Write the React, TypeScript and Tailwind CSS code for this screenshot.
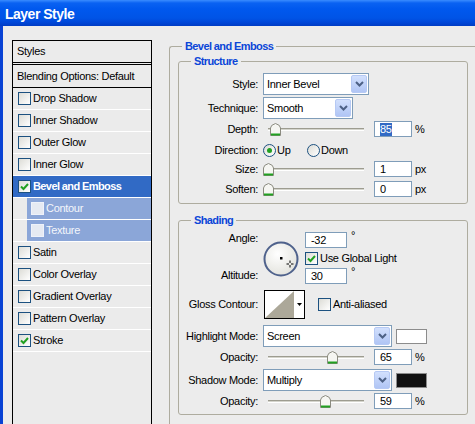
import React from 'react';

interface StyleItem {
  name: string;
  checked?: boolean;
  selected?: boolean;
  sub?: boolean;
}

const styleItems: StyleItem[] = [
  { name: 'Drop Shadow' },
  { name: 'Inner Shadow' },
  { name: 'Outer Glow' },
  { name: 'Inner Glow' },
  { name: 'Bevel and Emboss', checked: true, selected: true },
  { name: 'Contour', sub: true },
  { name: 'Texture', sub: true },
  { name: 'Satin' },
  { name: 'Color Overlay' },
  { name: 'Gradient Overlay' },
  { name: 'Pattern Overlay' },
  { name: 'Stroke', checked: true },
];

function Check({ checked = false, sub = false }: { checked?: boolean; sub?: boolean }) {
  return (
    <span
      className={
        sub
          ? 'w-[13px] h-[13px] shrink-0 border border-[#eef2fa] bg-[#e6eaf2] flex items-center justify-center'
          : 'w-[13px] h-[13px] shrink-0 border border-[#1c5180] bg-[linear-gradient(135deg,#dcdcd6,#ffffff)] flex items-center justify-center'
      }
    >
      {checked && (
        <svg width="9" height="8" viewBox="0 0 9 8">
          <path d="M1 3.5 L3.5 6 L8 1" fill="none" stroke="#21a121" strokeWidth="2" />
        </svg>
      )}
    </span>
  );
}

function Radio({ on = false }: { on?: boolean }) {
  return (
    <span className="w-[13px] h-[13px] shrink-0 rounded-full border border-[#1c5180] bg-[linear-gradient(135deg,#dcdcd6,#ffffff)] flex items-center justify-center">
      {on && <span className="w-[5px] h-[5px] rounded-full bg-[#21a121]" />}
    </span>
  );
}

function Select({ value, w }: { value: string; w: string }) {
  return (
    <div className={`${w} h-[22px] border border-[#7f9db9] bg-white flex items-center justify-between pl-[3px] pr-px`}>
      <span>{value}</span>
      <span className="w-[16px] h-[18px] rounded-[2px] border border-[#b6c9f4] bg-[linear-gradient(to_bottom,#d2e0fd,#b0c5f5)] flex items-center justify-center">
        <svg width="9" height="6" viewBox="0 0 9 6">
          <path d="M1 1 L4.5 4.5 L8 1" fill="none" stroke="#4d6185" strokeWidth="2" />
        </svg>
      </span>
    </div>
  );
}

function Slider({ pos }: { pos: number }) {
  return (
    <div className="relative w-[106px] h-[16px] shrink-0">
      <div className="absolute left-[5px] right-[5px] top-[7px] h-[3px] border-t border-[#9d9c90] border-b border-b-white bg-[#d4d4cc]" />
      <svg className="absolute top-[2px]" style={{ left: pos }} width="11" height="13" viewBox="0 0 11 13">
        <path d="M0.5 12.5 V5 Q0.5 2 5.5 0.5 Q10.5 2 10.5 5 V12.5 Z" fill="#f6f6f2" stroke="#8b8b80" />
        <path d="M1 11.5 H10" stroke="#21a121" strokeWidth="2" />
      </svg>
    </div>
  );
}

function Num({ children, w = 'w-[38px]' }: { children: React.ReactNode; w?: string }) {
  return (
    <div className={`${w} h-[16px] shrink-0 border border-[#7f9db9] bg-white flex items-center pl-[5px]`}>
      {children}
    </div>
  );
}

function Row({ label, cls, children }: { label: string; cls: string; children: React.ReactNode }) {
  return (
    <div className={`flex items-center ${cls}`}>
      <div className="w-[79px] shrink-0 text-right">{label}</div>
      <div className="ml-[5px] flex items-center h-full">{children}</div>
    </div>
  );
}

function SliderRow({ label, pos, value, unit, cls }: { label: string; pos: number; value: React.ReactNode; unit: string; cls: string }) {
  return (
    <Row label={label} cls={cls}>
      <Slider pos={pos} />
      <div className="ml-[5px]">
        <Num>{value}</Num>
      </div>
      <span className="ml-[3px]">{unit}</span>
    </Row>
  );
}

function GroupLabel({ text, ml }: { text: string; ml: string }) {
  return (
    <div className={`-mt-[7px] ${ml} px-[3px] w-fit h-[13px] leading-[13px] bg-[#ececec] font-bold tracking-[-0.6px] text-[#0b46d8]`}>
      {text}
    </div>
  );
}

export default function App() {
  return (
    <div className="w-[475px] h-[424px] overflow-hidden bg-[#ececec] text-[11px] leading-[13px] tracking-[-0.3px] text-black font-['Liberation_Sans',Arial,sans-serif]">
      {/* title bar */}
      <div className="h-[26px] pl-[5px] pt-[2px] flex items-center bg-[linear-gradient(to_bottom,#3a8cff_0px,#0a62f2_3px,#0058ee_9px,#0054e6_18px,#0048da_22px,#003cc4_26px)]">
        <span className="text-white font-bold text-[14px] tracking-[-0.5px]">Layer Style</span>
      </div>

      <div className="h-[398px] flex border-l-[3px] border-[#0842d4] overflow-hidden">
        {/* styles list */}
        <div className="mt-[14px] ml-[9px] w-[140px] h-[400px] shrink-0 border border-black bg-[#ebebeb]">
          <div className="h-[24px] pl-[4px] flex items-center border-b-[3px] border-double border-black">Styles</div>
          <div className="h-[23px] pl-[4px] flex items-center border-b border-black">Blending Options: Default</div>
          {styleItems.map((s) =>
            s.sub ? (
              <div key={s.name} className="h-[22px] border-b border-white flex">
                <div className="ml-[14px] flex-1 bg-[#8ba6d8] flex items-center pl-[4px] text-[#f4f6fb]">
                  <Check sub />
                  <span className="ml-[2px]">{s.name}</span>
                </div>
              </div>
            ) : (
              <div
                key={s.name}
                className={
                  s.selected
                    ? 'h-[22px] border-b border-white flex items-center pl-[5px] bg-[#316ac5] text-white font-bold tracking-[-0.6px]'
                    : 'h-[22px] border-b border-white flex items-center pl-[5px]'
                }
              >
                <Check checked={s.checked} />
                <span className="ml-[2px]">{s.name}</span>
              </div>
            )
          )}
        </div>

        {/* Bevel and Emboss group */}
        <div className="ml-[17px] mt-[20px] flex-1 border-l border-t border-[#aeac9f] rounded-tl-[3px] pl-[8px] pr-[7px]">
          <GroupLabel text="Bevel and Emboss" ml="ml-[4px]" />

          {/* Structure */}
          <div className="mt-[8px] w-[290px] border border-[#aeac9f] rounded-[3px] pb-[6px]">
            <GroupLabel text="Structure" ml="ml-[12px]" />
            <Row label="Style:" cls="mt-[5px] h-[22px]">
              <Select value="Inner Bevel" w="w-[106px]" />
            </Row>
            <Row label="Technique:" cls="mt-[2px] h-[22px]">
              <Select value="Smooth" w="w-[90px]" />
            </Row>
            <SliderRow
              label="Depth:"
              pos={7}
              value={<span className="bg-[#316ac5] text-white">85</span>}
              unit="%"
              cls="mt-[2px] h-[16px]"
            />
            <Row label="Direction:" cls="mt-[4px] h-[18px]">
              <div className="w-[44px] flex items-center">
                <Radio on />
                <span className="ml-px">Up</span>
              </div>
              <Radio />
              <span className="ml-px">Down</span>
            </Row>
            <SliderRow label="Size:" pos={0} value="1" unit="px" cls="mt-[2px] h-[16px]" />
            <SliderRow label="Soften:" pos={0} value="0" unit="px" cls="mt-[4px] h-[16px]" />
          </div>

          {/* Shading */}
          <div className="mt-[16px] w-[290px] border border-[#aeac9f] rounded-[3px] pb-[5px]">
            <GroupLabel text="Shading" ml="ml-[12px]" />
            <div className="flex mt-[5px] h-[52px]">
              <div className="w-[79px] shrink-0 text-right flex flex-col justify-between pb-[2px]">
                <span>Angle:</span>
                <span>Altitude:</span>
              </div>
              <svg className="ml-[5px] mt-[9px] shrink-0" width="36" height="36" viewBox="0 0 36 36">
                <defs>
                  <radialGradient id="dial" cx="0.4" cy="0.35" r="0.7">
                    <stop offset="0" stopColor="#ffffff" />
                    <stop offset="1" stopColor="#e2e2dc" />
                  </radialGradient>
                </defs>
                <circle cx="18" cy="18" r="16.5" fill="url(#dial)" stroke="#4f628c" strokeWidth="2" />
                <rect x="17" y="16" width="2.5" height="2.5" fill="#000" />
                <path d="M27 19.5 V22 M27 24 V26.5 M23.5 23 H26 M28 23 H30.5" stroke="#000" strokeWidth="1" />
              </svg>
              <div className="ml-[6px] flex flex-col">
                <div className="flex">
                  <Num w="w-[42px]">-32</Num>
                  <span className="ml-[4px] -mt-[3px]">°</span>
                </div>
                <div className="mt-[4px] h-[13px] flex items-center">
                  <Check checked />
                  <span className="ml-[2px]">Use Global Light</span>
                </div>
                <div className="mt-[3px] flex">
                  <Num w="w-[42px]">30</Num>
                  <span className="ml-[4px] -mt-[3px]">°</span>
                </div>
              </div>
            </div>

            <div className="flex items-center mt-[6px] h-[29px]">
              <div className="w-[79px] shrink-0 text-right">Gloss Contour:</div>
              <div className="ml-[6px] w-[41px] h-[29px] border border-black bg-white flex">
                <svg width="29" height="27" viewBox="0 0 29 27">
                  <path d="M0 27 L29 0 L29 27 Z" fill="#aca899" />
                </svg>
                <div className="flex-1 flex items-center justify-center">
                  <svg width="5" height="3" viewBox="0 0 5 3">
                    <path d="M0 0 H5 L2.5 3 Z" fill="#000" />
                  </svg>
                </div>
              </div>
              <div className="ml-[13px] flex items-center">
                <Check />
                <span className="ml-[2px]">Anti-aliased</span>
              </div>
            </div>

            <Row label="Highlight Mode:" cls="mt-[6px] h-[22px]">
              <Select value="Screen" w="w-[129px]" />
              <div className="ml-[4px] w-[31px] h-[15px] border border-[#8c8c8c] bg-white" />
            </Row>
            <SliderRow label="Opacity:" pos={64} value="65" unit="%" cls="mt-[2px] h-[16px]" />
            <Row label="Shadow Mode:" cls="mt-[4px] h-[22px]">
              <Select value="Multiply" w="w-[129px]" />
              <div className="ml-[4px] w-[31px] h-[15px] border border-[#8c8c8c] bg-[#111111]" />
            </Row>
            <SliderRow label="Opacity:" pos={57} value="59" unit="%" cls="mt-[2px] h-[16px]" />
          </div>
        </div>
      </div>
    </div>
  );
}
